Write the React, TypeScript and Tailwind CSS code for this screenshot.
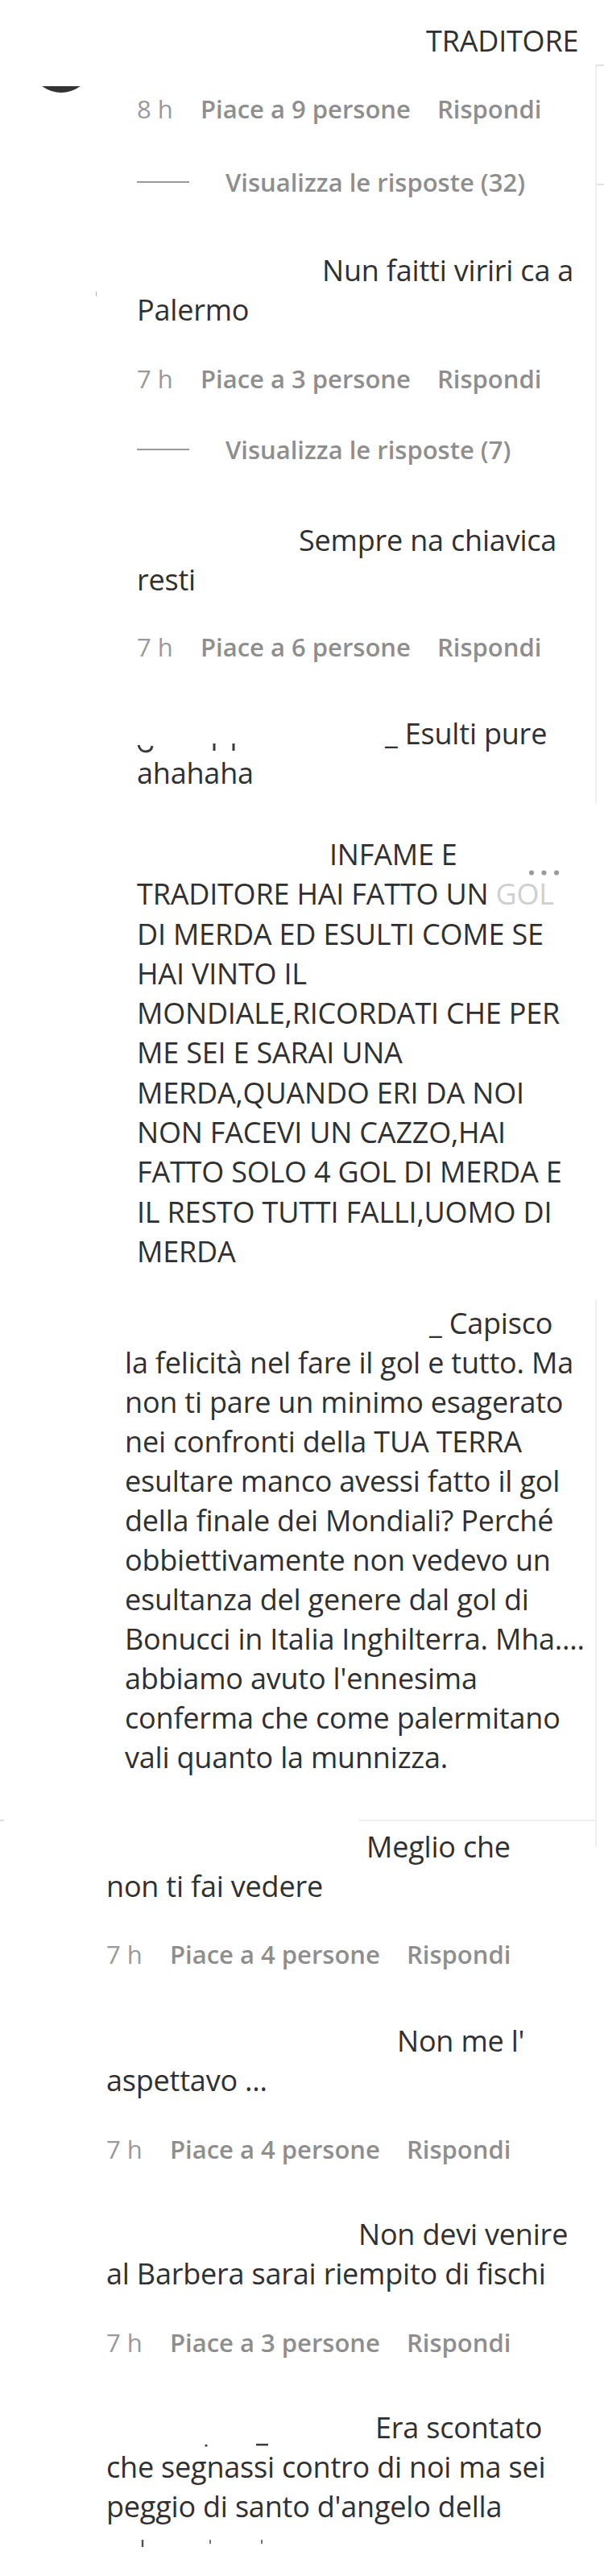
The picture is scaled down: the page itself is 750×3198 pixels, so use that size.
import { ReactNode } from 'react';

const lineCls = 'h-[49px] leading-[49px] text-[36px] tracking-[-0.2px] text-[#303030] whitespace-nowrap';

function Line({ children, className = '' }: { children?: ReactNode; className?: string }) {
    return <div className={`${lineCls} ${className}`}>{children}</div>;
}

function Meta({ time, likes, className = '' }: { time: string; likes: number; className?: string }) {
    return (
        <div className={`flex h-[40px] leading-[40px] text-[31px] text-[#8e8e8e] whitespace-nowrap ${className}`}>
            <span className="w-[79px] shrink-0 text-[#999999]">{time}</span>
            <span className="w-[294px] shrink-0 font-semibold">Piace a {likes} persone</span>
            <span className="font-semibold">Rispondi</span>
        </div>
    );
}

function ViewReplies({ count, className = '' }: { count: number; className?: string }) {
    return (
        <div className={`flex h-[40px] items-center text-[31px] leading-[40px] text-[#8e8e8e] whitespace-nowrap ${className}`}>
            <span className="h-[2px] w-[65px] bg-[#999999]" />
            <span className="ml-[45px] font-semibold">Visualizza le risposte ({count})</span>
        </div>
    );
}

export default function App() {
    return (
        <div className="flex h-[3198px] w-[750px] overflow-hidden bg-white font-['Open_Sans',sans-serif]">
            <div className="w-[739px] shrink-0">
                {/* first three comments */}
                <div className="flex">
                    <div className="w-[170px] shrink-0">
                        <svg className="ml-[52px] mt-[107px] block" width="48" height="8" viewBox="0 0 48 8">
                            <path d="M0 0 H48 Q24 16 0 0 Z" fill="#333333" />
                        </svg>
                        <div className="ml-[119px] mt-[247px] h-[6px] w-px bg-[#a6d15a]" />
                    </div>
                    <div className="flex-1">
                        <Line className="mt-[26px] pl-[359px]">TRADITORE</Line>
                        <Meta className="mt-[40px]" time="8 h" likes={9} />
                        <ViewReplies className="mt-[51px]" count={32} />

                        <Line className="mt-[65px] pl-[230px]">Nun faitti viriri ca a</Line>
                        <Line>Palermo</Line>
                        <Meta className="mt-[41px]" time="7 h" likes={3} />
                        <ViewReplies className="mt-[48px]" count={7} />

                        <Line className="mt-[68px] pl-[201px]">Sempre na chiavica</Line>
                        <Line>resti</Line>
                        <Meta className="mt-[39px]" time="7 h" likes={6} />

                        <div className={`mt-[63px] flex ${lineCls}`}>
                            <svg className="shrink-0" width="308" height="49" viewBox="0 0 308 49">
                                <path d="M2 39 Q4 47 11 47 Q18 47 19 40" fill="none" stroke="#3a3a3a" strokeWidth="3" />
                                <line x1="96" y1="37" x2="96" y2="46" stroke="#3a3a3a" strokeWidth="3" />
                                <line x1="120" y1="37" x2="120" y2="46" stroke="#3a3a3a" strokeWidth="3" />
                            </svg>
                            <span>_ Esulti pure</span>
                        </div>
                        <Line>ahahaha</Line>
                    </div>
                </div>

                {/* INFAME comment */}
                <div className="mt-[52px] pl-[170px] [&>div]:h-[49.3px] [&>div]:leading-[49.3px]">
                    <div className={`flex items-start ${lineCls}`}>
                        <span className="pl-[239px]">INFAME E</span>
                        <svg className="ml-[88px] mt-[44px] shrink-0" width="39" height="7" viewBox="0 0 39 7">
                            <circle cx="4" cy="3.5" r="3" fill="#9a9a9a" />
                            <circle cx="19.5" cy="3.5" r="3" fill="#9a9a9a" />
                            <circle cx="35" cy="3.5" r="3" fill="#9a9a9a" />
                        </svg>
                    </div>
                    <Line>
                        TRADITORE HAI FATTO UN <span className="text-[#cfcfcf]">GOL</span>
                    </Line>
                    <Line>DI MERDA ED ESULTI COME SE</Line>
                    <Line>HAI VINTO IL</Line>
                    <Line>MONDIALE,RICORDATI CHE PER</Line>
                    <Line>ME SEI E SARAI UNA</Line>
                    <Line>MERDA,QUANDO ERI DA NOI</Line>
                    <Line>NON FACEVI UN CAZZO,HAI</Line>
                    <Line>FATTO SOLO 4 GOL DI MERDA E</Line>
                    <Line>IL RESTO TUTTI FALLI,UOMO DI</Line>
                    <Line>MERDA</Line>
                </div>

                {/* Capisco comment */}
                <div className="mt-[40px] pl-[155px]">
                    <Line className="pl-[378px]">_ Capisco</Line>
                    <Line>la felicità nel fare il gol e tutto. Ma</Line>
                    <Line>non ti pare un minimo esagerato</Line>
                    <Line>nei confronti della TUA TERRA</Line>
                    <Line>esultare manco avessi fatto il gol</Line>
                    <Line>della finale dei Mondiali? Perché</Line>
                    <Line>obbiettivamente non vedevo un</Line>
                    <Line>esultanza del genere dal gol di</Line>
                    <Line>Bonucci in Italia Inghilterra. Mha....</Line>
                    <Line>abbiamo avuto l'ennesima</Line>
                    <Line>conferma che come palermitano</Line>
                    <Line>vali quanto la munnizza.</Line>
                </div>

                <div className="mt-[53px] flex h-[2px]">
                    <span className="w-[5px] bg-[#dddddd]" />
                    <span className="ml-[440px] flex-1 bg-[#efefef]" />
                </div>

                {/* last replies */}
                <div className="pl-[132px]">
                    <Line className="mt-[7px] pl-[323px]">Meglio che</Line>
                    <Line>non ti fai vedere</Line>
                    <Meta className="mt-[40px]" time="7 h" likes={4} />

                    <Line className="mt-[63px] pl-[361px]">Non me l'</Line>
                    <Line>aspettavo ...</Line>
                    <Meta className="mt-[41px]" time="7 h" likes={4} />

                    <Line className="mt-[61px] pl-[313px]">Non devi venire</Line>
                    <Line>al Barbera sarai riempito di fischi</Line>
                    <Meta className="mt-[41px]" time="7 h" likes={3} />

                    <div className={`mt-[61px] flex ${lineCls}`}>
                        <svg className="shrink-0" width="334" height="49" viewBox="0 0 334 49">
                            <circle cx="124" cy="47" r="1.6" fill="#3a3a3a" />
                            <line x1="186" y1="46" x2="201" y2="46" stroke="#3a3a3a" strokeWidth="2.5" />
                        </svg>
                        <span>Era scontato</span>
                    </div>
                    <Line>che segnassi contro di noi ma sei</Line>
                    <Line>peggio di santo d'angelo della</Line>
                    <svg className="block" width="300" height="30" viewBox="0 0 300 30">
                        <line x1="45" y1="17" x2="45" y2="26" stroke="#555555" strokeWidth="2.5" />
                        <line x1="129" y1="17" x2="129" y2="22" stroke="#777777" strokeWidth="2" />
                        <line x1="193" y1="17" x2="193" y2="22" stroke="#777777" strokeWidth="2" />
                    </svg>
                </div>
            </div>

            {/* faint right edge */}
            <div className="w-[11px] shrink-0">
                <div className="mt-[80px] h-[917px] border-l-2 border-[#eeeeee]">
                    <div className="h-[2px] bg-[#e2e2e2]" />
                    <div className="mt-[146px] h-[2px] bg-[#e2e2e2]" />
                </div>
                <div className="mt-[616px] h-[680px] border-l-2 border-[#f0f0f0]" />
            </div>
        </div>
    );
}
